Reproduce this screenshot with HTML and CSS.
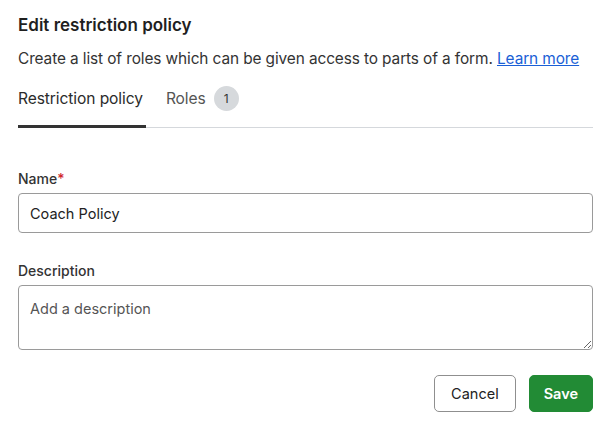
FILE: index.html
```html
<!DOCTYPE html>
<html lang="en">
<head>
    <meta charset="UTF-8">
    <meta name="viewport" content="width=device-width, initial-scale=1.0">
    <title>Edit restriction policy</title>
    <link rel="stylesheet" href="styles.css">
</head>
<body>
    <div class="dialog">
        <h2 class="title">Edit restriction policy</h2>
        <p class="subtitle">Create a list of roles which can be given access to parts of a form. <a href="#">Learn more</a></p>

        <div class="tabs">
            <div class="tab active">Restriction policy</div>
            <div class="tab">Roles <span class="badge">1</span></div>
        </div>

        <div class="field">
            <label for="name">Name<span class="required">*</span></label>
            <input type="text" id="name" value="Coach Policy">
        </div>

        <div class="field">
            <label for="description">Description</label>
            <textarea id="description" placeholder="Add a description"></textarea>
        </div>

        <div class="actions">
            <button class="btn btn-cancel">Cancel</button>
            <button class="btn btn-save">Save</button>
        </div>
    </div>
</body>
</html>
```

FILE: styles.css
```css
body {
    margin: 0;
    font-family: Inter, "Liberation Sans", Arial, sans-serif;
    background-color: #fff;
    color: #222;
}

.dialog {
    padding: 14px 18px 0 18px;
}

.title {
    margin: 0;
    font-size: 17px;
    font-weight: 600;
    line-height: 22px;
    color: #1f1f1f;
}

.subtitle {
    margin: 12px 0 0 0;
    font-size: 15.4px;
    line-height: 22px;
    color: #333;
    letter-spacing: -0.1px;
}

.subtitle a {
    color: #1a5fd6;
}

.tabs {
    display: flex;
    margin-top: 16px;
    border-bottom: 1px solid #d5d8dc;
}

.tab {
    display: flex;
    align-items: center;
    padding: 0 0 16px 0;
    margin-right: 20px;
    font-size: 15.6px;
    line-height: 24px;
    color: #555;
    letter-spacing: -0.1px;
}

.tab.active {
    color: #2b2b2b;
    box-shadow: inset 0 -3px 0 #333;
    margin-bottom: -1px;
    padding-bottom: 17px;
    padding-right: 3px;
}

.badge {
    display: inline-flex;
    align-items: center;
    justify-content: center;
    width: 25px;
    height: 25px;
    margin-left: 8px;
    border-radius: 50%;
    background-color: #d6d9dc;
    font-size: 12px;
    color: #333;
}

.field {
    display: flex;
    flex-direction: column;
    margin-top: 41px;
}

.field + .field {
    margin-top: 28px;
}

.field label {
    font-size: 14px;
    font-weight: 500;
    line-height: 20px;
    color: #333;
    margin-bottom: 4px;
}

.required {
    color: #d0262d;
}

.field input,
.field textarea {
    box-sizing: border-box;
    width: 100%;
    font-family: inherit;
    font-size: 14.5px;
    color: #222;
    border: 1px solid #9a9a9a;
    border-radius: 4px;
    padding: 0 11px;
}

.field input {
    height: 40px;
}

.field textarea {
    height: 65px;
    padding-top: 14px;
    resize: vertical;
}

.field textarea::placeholder {
    color: #555;
}

.actions {
    display: flex;
    justify-content: flex-end;
    gap: 13px;
    margin-top: 25px;
}

.btn {
    height: 37px;
    padding: 0 16px;
    font-family: inherit;
    font-size: 14.5px;
    border-radius: 5px;
}

.btn-cancel {
    background-color: #fff;
    border: 1px solid #8f8f8f;
    color: #222;
}

.btn-save {
    background-color: #228b35;
    border: 1px solid #228b35;
    color: #fff;
    font-weight: 600;
    padding: 0 14px;
}
```
